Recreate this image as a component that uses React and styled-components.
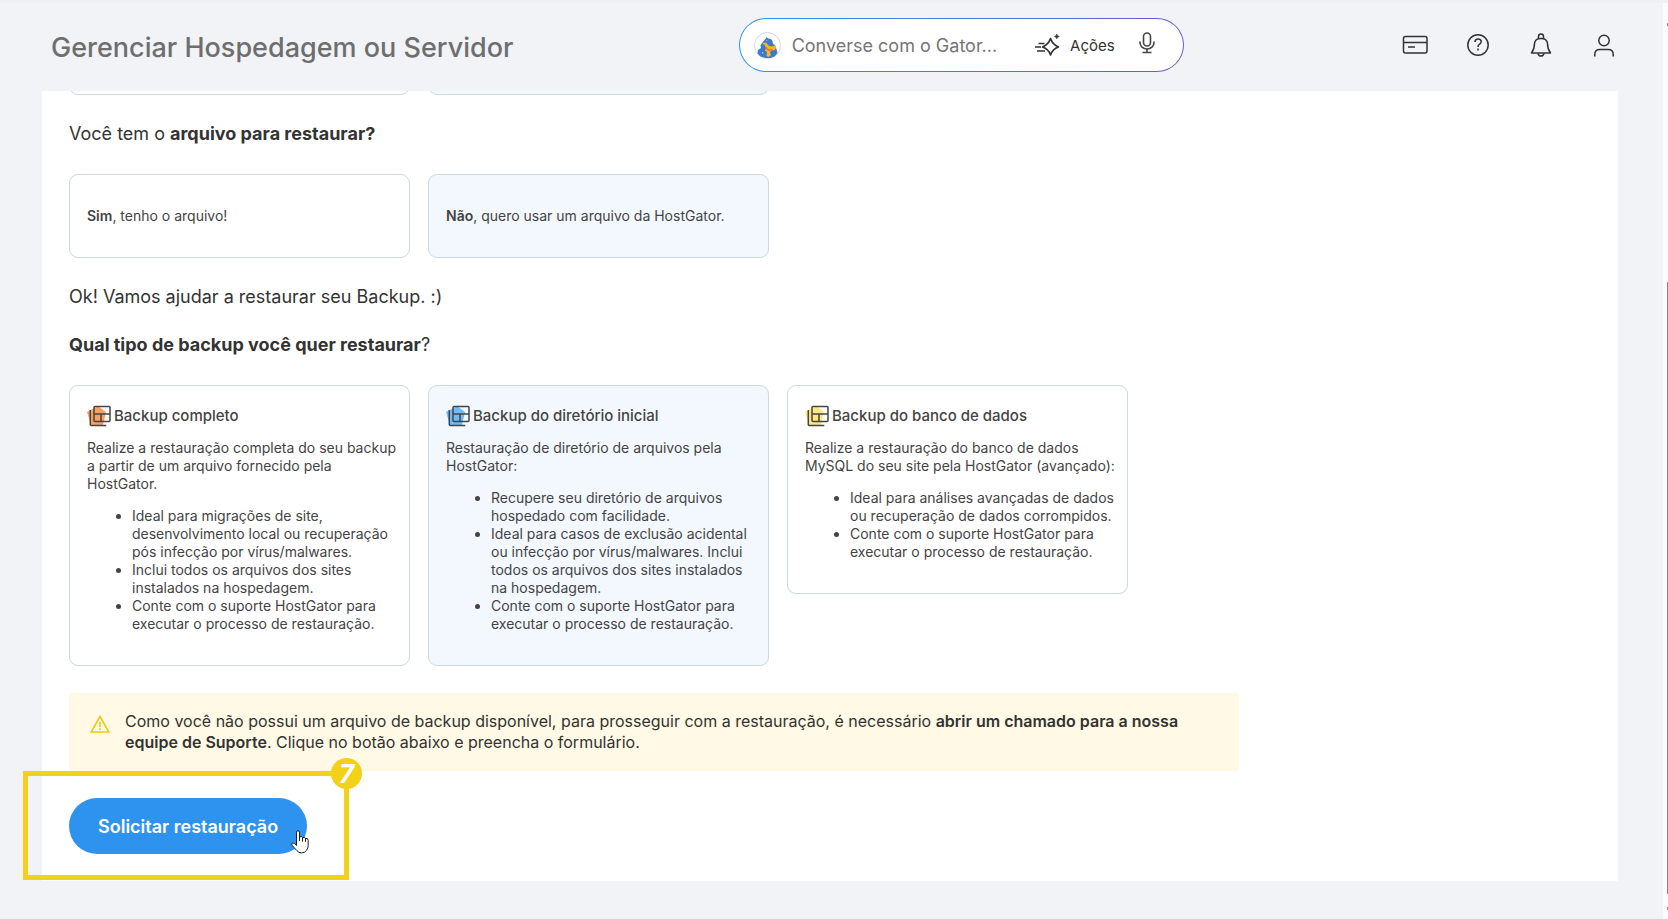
import React, { useState } from 'react';
import styled, { createGlobalStyle } from 'styled-components';

const GlobalStyle = createGlobalStyle`
  * {
    box-sizing: border-box;
  }
  body {
    margin: 0;
    background: #f1f3f7;
    color: #333;
    font-family: Inter, 'Liberation Sans', sans-serif;
    font-size: 16px;
  }
  button, input {
    font: inherit;
    color: inherit;
  }
`;

const Page = styled.div`
  display: flex;
  min-height: 100vh;
`;

const Content = styled.div`
  flex: 1;
  min-width: 0;
  padding: 0 45px 0 42px;
  border-top: 3px solid #f0f0f0;
`;

const Header = styled.header`
  display: flex;
  align-items: center;
  height: 88px;
  padding: 0 0 4px 9px;
`;

const PageTitle = styled.h1`
  flex: 19;
  margin: 0;
  padding-top: 5px;
  color: #6e6e6e;
  font-size: 27px;
  font-weight: 500;
  line-height: 32px;
  white-space: nowrap;
`;

const SearchBox = styled.form`
  display: flex;
  align-items: center;
  flex: none;
  width: 445px;
  height: 54px;
  padding: 0 28px 0 14px;
  border: 1px solid transparent;
  border-radius: 27px;
  background: linear-gradient(#fff, #fff) padding-box,
    linear-gradient(90deg, #2e93ee, #3f7fd6 50%, #6a5acd) border-box;
`;

const SearchInput = styled.input`
  flex: 1;
  min-width: 0;
  margin-left: 11px;
  padding: 0;
  border: none;
  outline: none;
  background: none;
  font-size: 18px;
  &::placeholder {
    color: #757575;
    opacity: 1;
  }
`;

const PlainButton = styled.button`
  display: flex;
  align-items: center;
  gap: 10px;
  padding: 0;
  border: none;
  background: none;
  color: #333;
  font-size: 15px;
  cursor: pointer;
`;

const HeaderNav = styled.nav`
  display: flex;
  flex: 12;
  justify-content: flex-end;
  gap: 35px;
`;

const MicButton = styled(PlainButton)`
  margin-left: 24px;
`;

const Panel = styled.main`
  display: flex;
  flex-direction: column;
  align-items: flex-start;
  overflow-x: visible;
  overflow-y: clip;
  padding: 0 27px 27px;
  background: #fff;
`;

const CardRow = styled.div`
  display: flex;
  align-items: flex-start;
  gap: 18px;
`;

/* row already scrolled under the header */
const ScrolledRow = styled(CardRow)`
  margin-top: -80px;
`;

const Question = styled.h2`
  margin: 27px 0 28px;
  font-size: 18px;
  font-weight: ${(props) => (props.$bold ? 700 : 400)};
  line-height: 24px;
`;

const Message = styled.p`
  margin: 27px 0 -3px;
  font-size: 18px;
  line-height: 24px;
`;

const Light = styled.span`
  font-weight: 400;
`;

const Card = styled.label`
  display: block;
  width: 341px;
  min-height: 84px;
  padding: 16px 10px 18px 17px;
  border: 1px solid #cdd8e0;
  border-radius: 9px;
  background: ${(props) => (props.$selected ? '#f3f8ff' : '#fff')};
  color: #444;
  font-size: 14px;
  line-height: 18px;
  cursor: pointer;
`;

const AnswerCard = styled(Card)`
  display: flex;
  align-items: center;
  padding: 17px;
  b {
    font-weight: 600;
  }
`;

const Radio = styled.input`
  position: absolute;
  opacity: 0;
  pointer-events: none;
`;

const CardTitle = styled.span`
  display: flex;
  align-items: center;
  gap: 3px;
  font-size: 15px;
  font-weight: 500;
  line-height: 28px;
`;

const CardText = styled.p`
  margin: 9px 0 14px;
`;

const CardList = styled.ul`
  margin: 14px 0;
  padding-left: 45px;
`;

const Alert = styled.div`
  display: flex;
  gap: 15px;
  width: 100%;
  max-width: 1170px;
  padding: 18px 60px 18px 21px;
  margin: 27px 0;
  border-radius: 4px;
  background: #fff9e5;
  line-height: 21px;
  svg {
    flex: none;
    margin-top: 4px;
  }
  p {
    margin: 0;
  }
  b {
    font-weight: 600;
  }
`;

const ButtonArea = styled.div`
  position: relative;
`;

const SubmitButton = styled.button`
  display: block;
  height: 56px;
  padding: 0 29px;
  border: none;
  border-radius: 28px;
  background: #2e93ee;
  color: #fff;
  font-size: 18px;
  font-weight: 600;
  cursor: pointer;
`;

const Highlight = styled.div`
  position: absolute;
  inset: -27px -42px -26px -46px;
  border: 5px solid #f3d117;
  pointer-events: none;
`;

const StepBadge = styled.span`
  position: absolute;
  top: -18px;
  right: -18px;
  width: 31px;
  height: 31px;
  border-radius: 50%;
  background: #f3d117;
  color: #fff;
  font-size: 26px;
  font-style: italic;
  font-weight: 700;
  line-height: 31px;
  text-align: center;
`;

const Pointer = styled.svg`
  position: absolute;
  right: -2px;
  bottom: 0;
`;

const ScrollTrack = styled.div`
  display: flex;
  flex-direction: column;
  align-items: flex-end;
  flex: none;
  width: 5px;
  padding: 20px 0 9px;
  border-top: 3px solid #f0f0f0;
  background: #fcfcfc;
  &::before,
  &::after {
    content: '';
    width: 1px;
    height: 3px;
    background: #888;
  }
`;

const ScrollThumb = styled.div`
  width: 1px;
  flex: 1;
  margin: 256px 0 13px;
  background: #858585;
`;

function GatorIcon() {
  return (
    <svg width="27" height="27" viewBox="0 0 27 27" aria-hidden="true">
      <circle cx="13.5" cy="13.5" r="13" fill="#fff" stroke="#cdd8e0" />
      <path
        d="M10 8.500l1.500-1.500 1-2 1.500 1.500 3 .5 1.500 2 .5 3 2 1 1.500 4 1 4-3 3.500-4 1.500h-5l-5-1.500-3-3 .5-3.500 3-2-.5-2.500 1.500-2.500z"
        fill="#3b7bc8"
      />
      <path
        d="M8 11l4-.5 3 3.500 3 .5 3-1 1 2-1 2.500-4 .5-1 2 1 2.500-2.500 2-2-1 .5-4-2-1.500 1-2.500-1.500-3z"
        fill="#ffb32c"
      />
      <path d="M11.500 14l3 3.500 4.500-.5-3.500 2-3-1.500z" fill="#f4622c" />
      <path d="M8 20l1.500.8-1 .9zM12.500 8l1 .5-1 .8z" fill="#fff" />
    </svg>
  );
}

function SparkleIcon() {
  return (
    <svg
      width="26"
      height="24"
      viewBox="0 0 26 24"
      fill="none"
      stroke="#333"
      strokeWidth="1.700"
      aria-hidden="true"
    >
      <path
        d="M16.500 5.500q2 6 8 8.500-6 2-8 8-2-6-8-8 6-2.500 8-8.500z"
        strokeLinejoin="round"
      />
      <path d="M4.500 10.500h6M1 14h6M3 18h8" />
      <path
        d="M22.800 1l.8 1.700 1.700.8-1.700.8-.8 1.700-.8-1.700-1.700-.8 1.700-.8z"
        fill="#333"
        stroke="#333"
        strokeWidth=".5"
      />
    </svg>
  );
}

function MicIcon() {
  return (
    <svg
      width="16"
      height="26"
      viewBox="0 0 16 26"
      fill="none"
      stroke="#444"
      strokeWidth="1.600"
      aria-hidden="true"
    >
      <rect x="4.500" y="1" width="7" height="13" rx="3.500" />
      <path d="M1 9.500v1a7 6.500 0 0 0 14 0v-1M8 17v3.500M3.500 20.500h9" />
    </svg>
  );
}

function NavIcon({ children }) {
  return (
    <svg
      width="28"
      height="28"
      viewBox="0 0 28 28"
      fill="none"
      stroke="#333"
      strokeWidth="1.500"
      aria-hidden="true"
    >
      {children}
    </svg>
  );
}

function BackupIcon({ color }) {
  return (
    <svg
      width="24"
      height="22"
      viewBox="0 0 24 22"
      fill="none"
      stroke="#444"
      strokeWidth="1.500"
      aria-hidden="true"
    >
      <path d="M0 7l11-6 8 6-3 13H4z" fill={color} stroke="none" />
      <rect x="7" y="1.500" width="16" height="15" rx="1" />
      <path d="M7 9h16M14 9v7.500M3.300 5v14.500q0 1 1 1h15" />
    </svg>
  );
}

const backups = [
  {
    id: 'full',
    title: 'Backup completo',
    color: '#ff9e60',
    text: 'Realize a restauração completa do seu backup a partir de um arquivo fornecido pela HostGator.',
    items: [
      'Ideal para migrações de site, desenvolvimento local ou recuperação pós infecção por vírus/malwares.',
      'Inclui todos os arquivos dos sites instalados na hospedagem.',
      'Conte com o suporte HostGator para executar o processo de restauração.',
    ],
  },
  {
    id: 'home',
    title: 'Backup do diretório inicial',
    color: '#6cbcff',
    text: 'Restauração de diretório de arquivos pela HostGator:',
    items: [
      'Recupere seu diretório de arquivos hospedado com facilidade.',
      'Ideal para casos de exclusão acidental ou infecção por vírus/malwares. Inclui todos os arquivos dos sites instalados na hospedagem.',
      'Conte com o suporte HostGator para executar o processo de restauração.',
    ],
  },
  {
    id: 'database',
    title: 'Backup do banco de dados',
    color: '#ffe682',
    text: 'Realize a restauração do banco de dados MySQL do seu site pela HostGator (avançado):',
    items: [
      'Ideal para análises avançadas de dados ou recuperação de dados corrompidos.',
      'Conte com o suporte HostGator para executar o processo de restauração.',
    ],
  },
];

export default function App() {
  const [hasFile, setHasFile] = useState(false);
  const [backup, setBackup] = useState('home');

  return (
    <>
      <GlobalStyle />
      <Page>
        <Content>
          <Header>
            <PageTitle>Gerenciar Hospedagem ou Servidor</PageTitle>
            <SearchBox onSubmit={(e) => e.preventDefault()}>
              <GatorIcon />
              <SearchInput
                type="text"
                aria-label="Converse com o Gator"
                placeholder="Converse com o Gator..."
              />
              <PlainButton type="button">
                <SparkleIcon />
                Ações
              </PlainButton>
              <MicButton type="button" aria-label="Microfone">
                <MicIcon />
              </MicButton>
            </SearchBox>
            <HeaderNav>
              <PlainButton type="button" aria-label="Pagamentos">
                <NavIcon>
                  <rect x="2.500" y="5.500" width="23.500" height="16.500" rx="2" />
                  <path d="M2.500 11.500H26M7 16h7" />
                </NavIcon>
              </PlainButton>
              <PlainButton type="button" aria-label="Ajuda">
                <NavIcon>
                  <circle cx="14" cy="14" r="10.200" />
                  <path d="M11 11q0-3 3.200-3 3 0 3 2.800 0 1.600-1.800 2.500-1.400.8-1.400 2.700M14 17.500v2" />
                </NavIcon>
              </PlainButton>
              <PlainButton type="button" aria-label="Notificações">
                <NavIcon>
                  <path
                    d="M4.500 22Q7.500 18 7.500 12.500 8 7.500 14 7.500T20.500 12.500Q20.500 18 23.500 22z"
                    strokeLinejoin="round"
                  />
                  <path d="M11.500 8V5.500q0-2.500 2.500-2.500t2.500 2.500V8M11 22.500q.5 2.500 3 2.500t3-2.500" />
                </NavIcon>
              </PlainButton>
              <PlainButton type="button" aria-label="Minha conta">
                <NavIcon>
                  <circle cx="14" cy="9.500" r="5.200" />
                  <path d="M4.800 25.500v-2q0-5 5-5h8.400q5 0 5 5v2" />
                </NavIcon>
              </PlainButton>
            </HeaderNav>
          </Header>

          <Panel>
            <ScrolledRow aria-hidden="true">
              <AnswerCard as="div" />
              <AnswerCard as="div" $selected />
            </ScrolledRow>

            <Question>
              Você tem o <b>arquivo para restaurar?</b>
            </Question>
            <CardRow>
              <AnswerCard $selected={hasFile}>
                <Radio
                  type="radio"
                  name="hasFile"
                  checked={hasFile}
                  onChange={() => setHasFile(true)}
                />
                <span>
                  <b>Sim</b>, tenho o arquivo!
                </span>
              </AnswerCard>
              <AnswerCard $selected={!hasFile}>
                <Radio
                  type="radio"
                  name="hasFile"
                  checked={!hasFile}
                  onChange={() => setHasFile(false)}
                />
                <span>
                  <b>Não</b>, quero usar um arquivo da HostGator.
                </span>
              </AnswerCard>
            </CardRow>

            <Message>Ok! Vamos ajudar a restaurar seu Backup. :)</Message>
            <Question $bold>
              Qual tipo de backup você quer restaurar<Light>?</Light>
            </Question>
            <CardRow>
              {backups.map((item) => (
                <Card key={item.id} $selected={backup === item.id}>
                  <Radio
                    type="radio"
                    name="backup"
                    checked={backup === item.id}
                    onChange={() => setBackup(item.id)}
                  />
                  <CardTitle>
                    <BackupIcon color={item.color} />
                    {item.title}
                  </CardTitle>
                  <CardText>{item.text}</CardText>
                  <CardList>
                    {item.items.map((line) => (
                      <li key={line}>{line}</li>
                    ))}
                  </CardList>
                </Card>
              ))}
            </CardRow>

            <Alert>
              <svg
                width="20"
                height="18"
                viewBox="0 0 20 18"
                fill="none"
                stroke="#f0c90c"
                strokeWidth="1.600"
                aria-hidden="true"
              >
                <path d="M10 1.500L18.800 17H1.200z" />
                <path d="M10 7v5M10 13.300v1.700" />
              </svg>
              <p>
                Como você não possui um arquivo de backup disponível, para
                prosseguir com a restauração, é necessário{' '}
                <b>abrir um chamado para a nossa equipe de Suporte</b>. Clique no
                botão abaixo e preencha o formulário.
              </p>
            </Alert>

            <ButtonArea>
              <SubmitButton type="button">Solicitar restauração</SubmitButton>
              <Highlight>
                <StepBadge>7</StepBadge>
              </Highlight>
              <Pointer width="18" height="24" viewBox="0 0 18 24" aria-hidden="true">
                <path
                  d="M5.500 14V2.200Q5.700.7 7 .7t1.500 1.500V7q2.200-1.200 3 .6 2.200-.8 3 .8 2.700-.4 2.700 2v5q0 3-1.700 5-1.500 2.500-5 2.500-3 0-4.500-2.200L1.200 15.500Q.2 13.500 1.500 13q1.500-.7 4 2.500z"
                  fill="#fff"
                  stroke="#1b1b2b"
                />
                <path d="M8.500 7v4M11.500 7.600v4M14.500 8.400v3.500" stroke="#1b1b2b" />
              </Pointer>
            </ButtonArea>
          </Panel>
        </Content>
        <ScrollTrack aria-hidden="true">
          <ScrollThumb />
        </ScrollTrack>
      </Page>
    </>
  );
}
